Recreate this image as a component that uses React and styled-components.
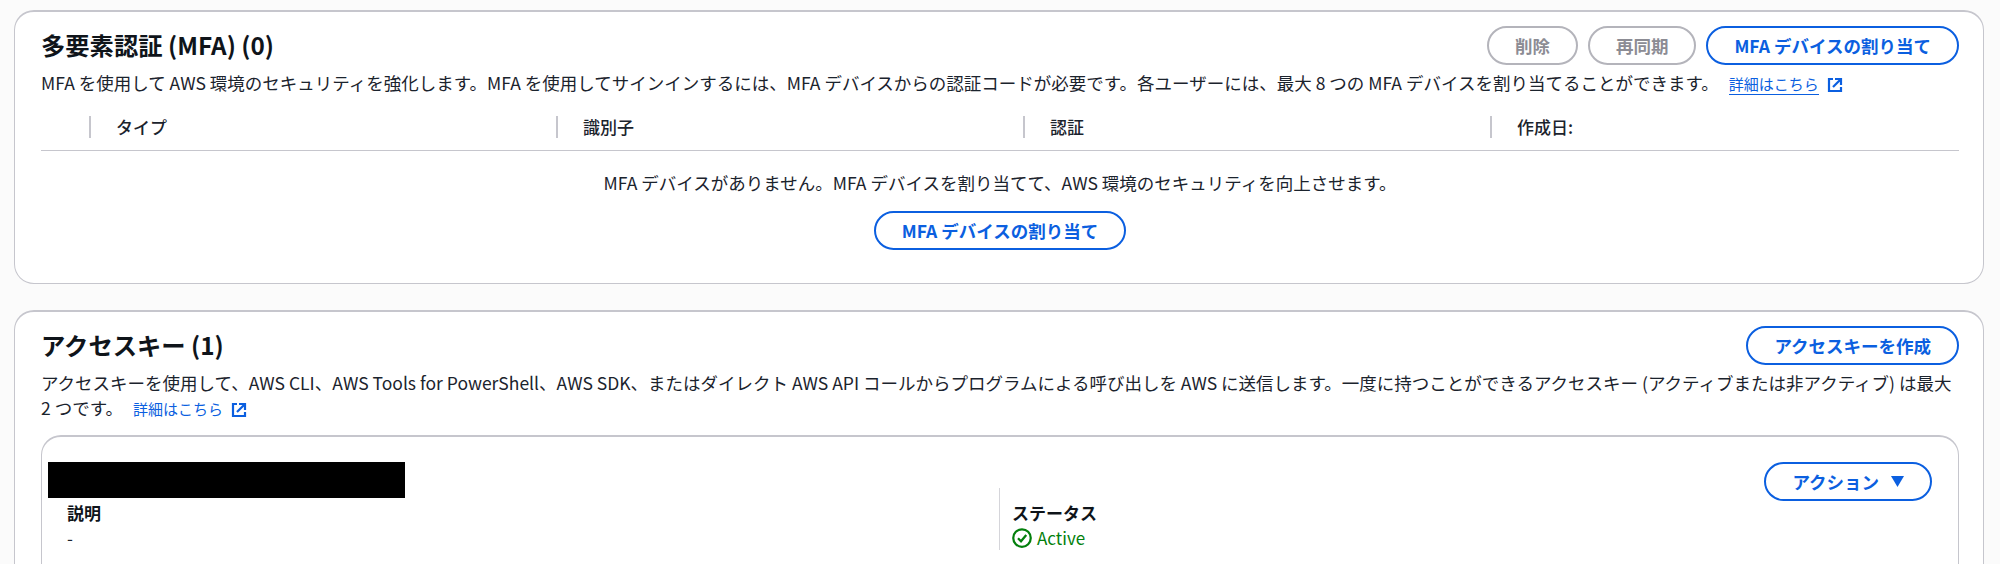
import React from 'react';
import styled, { createGlobalStyle } from 'styled-components';

const GlobalStyle = createGlobalStyle`
  html, body {
    margin: 0;
    padding: 0;
    background: #fbfbfb;
  }
  body {
    font-family: "Noto Sans CJK JP", "Noto Sans", sans-serif;
    color: #0f141a;
    font-size: 17.5px;
  }
`;

const Page = styled.div`
  height: 564px;
  overflow: hidden;
  padding: 10px 16px 0 14px;
  box-sizing: border-box;
  display: flex;
  flex-direction: column;
  gap: 26px;
`;

const Card = styled.section`
  background: #fff;
  border: 1px solid #c6c6cd;
  border-top-width: 2px;
  border-radius: 20px;
  padding: 14px 24px 30px 26px;
  flex-shrink: 0;
  height: ${(p) => (p.$open ? '400px' : '274px')};
  box-sizing: border-box;
`;

const CardHead = styled.div`
  display: flex;
  justify-content: space-between;
  align-items: flex-start;
  height: 39px;
`;

const Title = styled.h2`
  margin: -1px 0 0;
  font-size: 24.3px;
  font-weight: 700;
  line-height: 39px;
  color: #0f141a;
`;

const Actions = styled.div`
  display: flex;
  gap: 10px;
`;

const Button = styled.button`
  height: 39px;
  padding: 0 26px;
  border-radius: 20px;
  border: 2px solid ${(p) => (p.disabled ? '#b4b4bb' : '#0b5fe0')};
  background: #fff;
  color: ${(p) => (p.disabled ? '#8c8c94' : '#0b5fe0')};
  font-family: inherit;
  font-size: 17.5px;
  font-weight: 700;
  line-height: 1;
  display: inline-flex;
  align-items: center;
  gap: 12px;
  white-space: nowrap;
  box-sizing: border-box;
`;

const Desc = styled.p`
  margin: 5px 0 0;
  font-size: 17.5px;
  line-height: 25px;
  color: #1b232d;
`;

const Info = styled.a`
  margin-left: 10px;
  font-size: 15px;
  color: #0b5fe0;
  white-space: nowrap;
`;

const InfoText = styled.span`
  border-bottom: ${(p) => (p.$line ? '1px solid #0b5fe0' : 'none')};
`;

const InfoIcon = styled.svg`
  margin-left: 8px;
  vertical-align: -3px;
`;

const TableHead = styled.div`
  display: grid;
  grid-template-columns: 48px repeat(4, 467px);
  margin-top: 20px;
  padding-bottom: 12px;
  border-bottom: 1px solid #c6c6cd;
`;

const Th = styled.div`
  border-left: 2px solid #c6c6cd;
  padding-left: 25px;
  font-weight: 500;
  font-size: 17px;
  line-height: 22px;
  color: #1b232d;
`;

const Empty = styled.div`
  display: flex;
  flex-direction: column;
  align-items: center;
  gap: 16px;
  margin-top: 19px;
  font-size: 17.5px;
  line-height: 25px;
  color: #1b232d;
`;

const KeyCard = styled.div`
  margin-top: 14px;
  height: 200px;
  border: 1px solid #c6c6cd;
  border-top-width: 2px;
  border-radius: 20px;
  padding: 25px 26px 0 6px;
  box-sizing: border-box;
`;

const KeyHead = styled.div`
  display: flex;
  justify-content: space-between;
  align-items: flex-start;
  height: 36px;
`;

const Redacted = styled.div`
  width: 357px;
  height: 36px;
  background: #000;
`;

const KeyCols = styled.div`
  display: grid;
  grid-template-columns: 951px 1fr;
`;

const KeyCol = styled.div`
  padding: 2px 0 0 ${(p) => p.$left}px;
  border-left: ${(p) => (p.$rule ? '1px solid #d5d5da' : 'none')};
  margin-top: ${(p) => (p.$rule ? '-10px' : '0')};
  padding-top: ${(p) => (p.$rule ? '12px' : '2px')};
`;

const Label = styled.div`
  font-weight: 700;
  font-size: 17px;
  line-height: 25px;
`;

const Value = styled.div`
  font-size: 17px;
  line-height: 25px;
  color: ${(p) => p.$color || '#1b232d'};
  display: flex;
  align-items: center;
  gap: 5px;
`;

const ExternalIcon = () => (
  <InfoIcon width="16" height="16" viewBox="0 0 16 16" fill="none" stroke="#0b5fe0" strokeWidth="2.2">
    <path d="M14 8.01V2H8M14 2 6 10M6 2H2v12h12v-4" />
  </InfoIcon>
);

const CheckIcon = () => (
  <svg width="20" height="20" viewBox="0 0 16 16" fill="none" stroke="#037f0c" strokeWidth="1.8">
    <circle cx="8" cy="8" r="7" />
    <path d="M4.8 8.2 7.2 10.6 11.4 5.6" />
  </svg>
);

const CaretIcon = () => (
  <svg width="13" height="11" viewBox="0 0 13 11" fill="#0b5fe0">
    <path d="M0 0h13L6.5 11z" />
  </svg>
);

const InfoLink = ({ line }) => (
  <Info>
    <InfoText $line={line}>詳細はこちら</InfoText>
    <ExternalIcon />
  </Info>
);

const App = () => (
  <>
    <GlobalStyle />
    <Page>
      <Card>
        <CardHead>
          <Title>多要素認証 (MFA) (0)</Title>
          <Actions>
            <Button disabled>削除</Button>
            <Button disabled>再同期</Button>
            <Button>MFA デバイスの割り当て</Button>
          </Actions>
        </CardHead>
        <Desc>
          MFA を使用して AWS 環境のセキュリティを強化します。MFA を使用してサインインするには、MFA デバイスからの認証コードが必要です。各ユーザーには、最大 8 つの MFA デバイスを割り当てることができます。
          <InfoLink line />
        </Desc>
        <TableHead>
          <span />
          <Th>タイプ</Th>
          <Th>識別子</Th>
          <Th>認証</Th>
          <Th>作成日:</Th>
        </TableHead>
        <Empty>
          MFA デバイスがありません。MFA デバイスを割り当てて、AWS 環境のセキュリティを向上させます。
          <Button>MFA デバイスの割り当て</Button>
        </Empty>
      </Card>
      <Card $open>
        <CardHead>
          <Title>アクセスキー (1)</Title>
          <Actions>
            <Button>アクセスキーを作成</Button>
          </Actions>
        </CardHead>
        <Desc>
          アクセスキーを使用して、AWS CLI、AWS Tools for PowerShell、AWS SDK、またはダイレクト AWS API コールからプログラムによる呼び出しを AWS に送信します。一度に持つことができるアクセスキー (アクティブまたは非アクティブ) は最大<br />2 つです。
          <InfoLink />
        </Desc>
        <KeyCard>
          <KeyHead>
            <Redacted />
            <Button>アクション <CaretIcon /></Button>
          </KeyHead>
          <KeyCols>
            <KeyCol $left={19}>
              <Label>説明</Label>
              <Value>-</Value>
            </KeyCol>
            <KeyCol $left={12} $rule>
              <Label>ステータス</Label>
              <Value $color="#037f0c"><CheckIcon />Active</Value>
            </KeyCol>
          </KeyCols>
        </KeyCard>
      </Card>
    </Page>
  </>
);

export default App;
